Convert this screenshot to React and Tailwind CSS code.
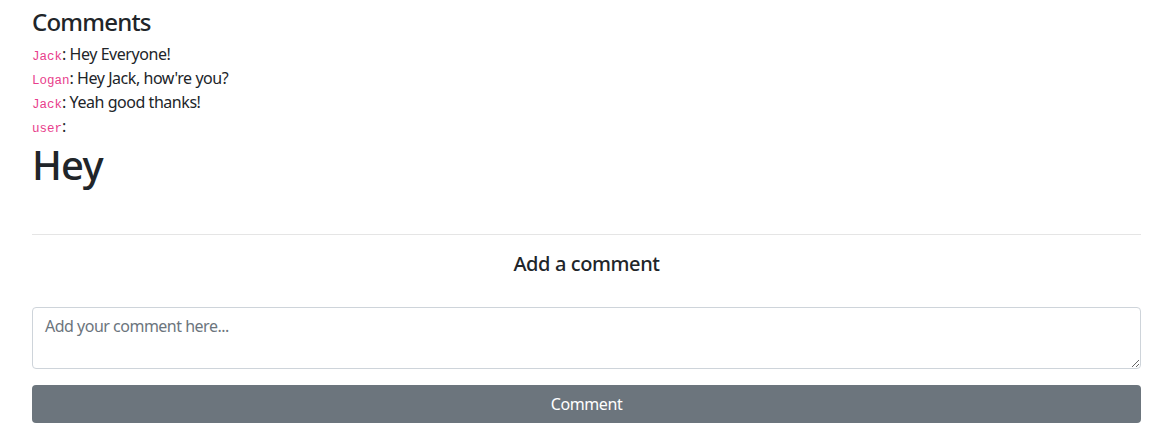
import React from "react";

const comments = [
  { name: "Jack", text: "Hey Everyone!" },
  { name: "Logan", text: "Hey Jack, how're you?" },
  { name: "Jack", text: "Yeah good thanks!" },
];

const mono = { fontFamily: '"Liberation Mono", "DejaVu Sans Mono", monospace' };
const sans = { fontFamily: '"Noto Sans", "Open Sans", sans-serif' };

export default function App() {
  return (
    <div className="min-h-[438px] bg-white text-[#212529] px-[32px] pt-[7px]" style={sans}>
      <h3 className="text-[24px] leading-[29px] font-medium tracking-[-0.8px] m-0">Comments</h3>
      <div className="mt-[6px]">
        {comments.map((c, i) => (
          <div key={i} className="text-[16px] leading-[24px] h-[24px] tracking-[-0.45px]">
            <code className="text-[12.5px] leading-none tracking-normal text-[#e83e8c]" style={mono}>
              {c.name}
            </code>
            : {c.text}
          </div>
        ))}
        <div className="text-[16px] leading-[24px] h-[24px]">
          <code className="text-[12.5px] leading-none text-[#e83e8c]" style={mono}>
            user
          </code>
          :
        </div>
        <h1 className="mt-[3px] text-[40px] leading-[48px] font-medium tracking-[-0.8px]">Hey</h1>
      </div>
      <hr className="mt-[45px] border-0 border-t border-[rgba(0,0,0,0.1)]" />
      <h5 className="text-center text-[20px] leading-[24px] font-medium tracking-[-0.4px] mt-[17px]">
        Add a comment
      </h5>
      <textarea
        rows={2}
        placeholder="Add your comment here..."
        className="block w-full mt-[31px] h-[62px] border border-[#ced4da] rounded-[4px] px-[12px] py-[6px] text-[16px] leading-[24px] tracking-[-0.5px] placeholder:text-[#6c757d] outline-none"
        style={sans}
      />
      <button
        className="block w-full mt-[16px] h-[38px] bg-[#6c757d] text-white rounded-[4px] text-[16px] leading-[24px] tracking-[-0.4px]"
        style={sans}
      >
        Comment
      </button>
    </div>
  );
}
